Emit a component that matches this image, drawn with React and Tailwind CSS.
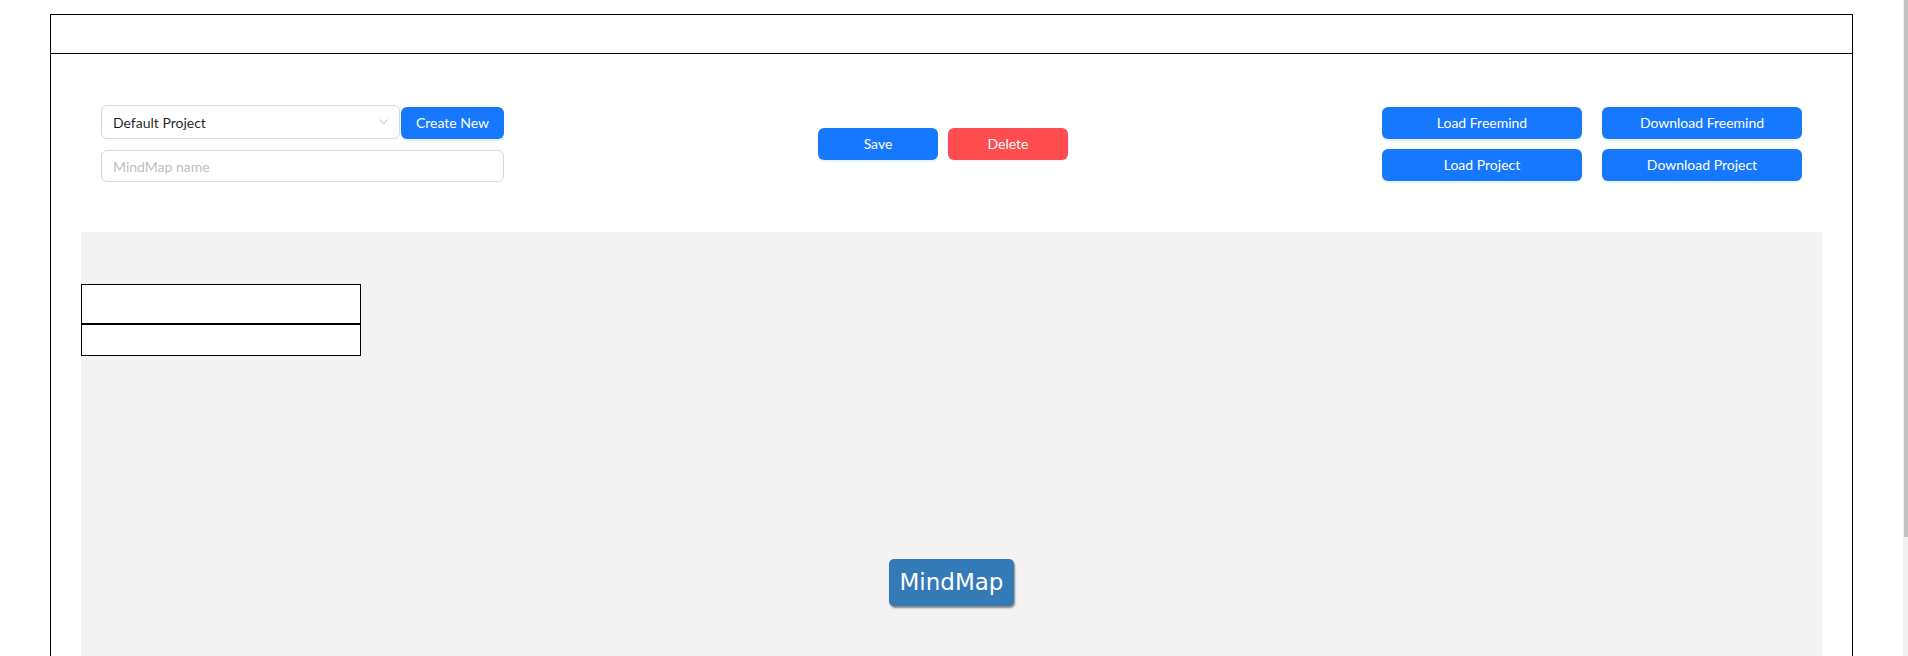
import React from 'react';

const btn = 'h-[32px] rounded-md text-white text-sm flex items-center justify-center';
const blue = 'bg-[#1677ff] shadow-[0_2px_0_rgba(5,145,255,0.1)]';

export default function App() {
  return (
    <div className="flex h-[656px] overflow-hidden bg-white font-['Lato','Liberation_Sans',sans-serif]">
      <div className="flex-1 min-w-0 px-[50px] pt-[14px]">
        <div className="border border-black">
          <div className="h-[39px] border-b border-black" />

          <div className="flex items-center justify-between px-[50px] pt-[51px] pb-[50px]">
            <div className="flex flex-col">
              <div className="flex items-end">
                <div className="w-[299px] h-[34px] border border-[#d9d9d9] rounded-md pl-[11px] pr-[11px] flex items-center justify-between text-sm text-[rgba(0,0,0,0.88)]">
                  <span className="pt-px">Default Project</span>
                  <svg width="9" height="6" viewBox="0 0 9 6" fill="none" stroke="#bfbfbf" strokeWidth="1">
                    <path d="M0.5 0.5 L4.5 5 L8.5 0.5" />
                  </svg>
                </div>
                <button className={`${btn} ${blue} ml-[1px] w-[103px]`}>Create New</button>
              </div>
              <input
                className="mt-[11px] w-[403px] h-[32px] border border-[#d9d9d9] rounded-md px-[11px] text-sm outline-none placeholder:text-[#bfbfbf]"
                placeholder="MindMap name"
              />
            </div>

            <div className="flex gap-[10px]">
              <button className={`${btn} ${blue} w-[120px]`}>Save</button>
              <button className={`${btn} w-[120px] bg-[#ff4d4f] shadow-[0_2px_0_rgba(255,38,5,0.06)]`}>Delete</button>
            </div>

            <div className="grid grid-cols-2 gap-x-[20px] gap-y-[10px]">
              <button className={`${btn} ${blue} w-[200px]`}>Load Freemind</button>
              <button className={`${btn} ${blue} w-[200px]`}>Download Freemind</button>
              <button className={`${btn} ${blue} w-[200px]`}>Load Project</button>
              <button className={`${btn} ${blue} w-[200px]`}>Download Project</button>
            </div>
          </div>

          <div className="mx-[30px] h-[600px] bg-[#f3f3f3] pt-[52px] flex flex-col">
            <div className="w-[280px]">
              <div className="h-[40px] border border-black bg-white" />
              <div className="h-[32px] border border-black bg-white" />
            </div>
            <div className="self-center mt-[203px] h-[47px] px-[11px] flex items-center rounded-[5px] bg-[#337ab7] text-white text-[23px] font-['DejaVu_Sans',sans-serif] shadow-[1px_2px_2px_rgba(0,0,0,0.45)]">
              MindMap
            </div>
          </div>
        </div>
      </div>
      <div className="w-[5px] h-full bg-[#f1f1f1] flex justify-end">
        <div className="w-[4px] h-[537px] bg-[#c1c1c1]" />
      </div>
    </div>
  );
}
